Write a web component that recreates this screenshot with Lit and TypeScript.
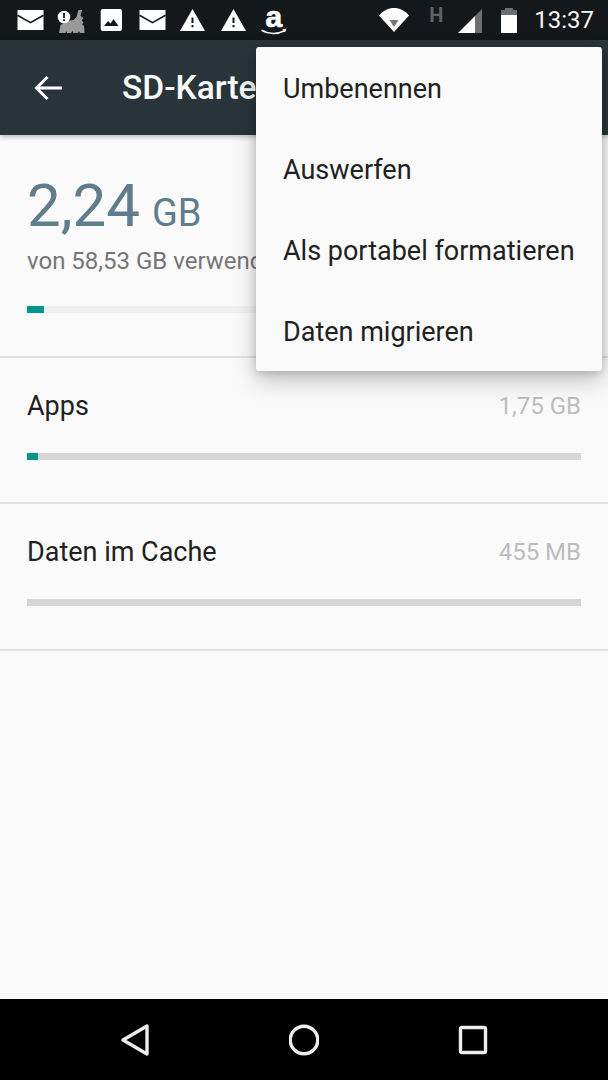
import { LitElement, html, css, svg } from "lit";
import { customElement } from "lit/decorators.js";

const mail = svg`<path class="w" d="M0.5 4h26v20h-26z"/><path class="cut" d="M0.5 9.2l13 7.5 13-7.5"/>`;
const warn = svg`<path class="w" d="M1 25L13.5 3 26 25z"/><path class="d" d="M12.5 11.5h2v5.5h-2zM12.5 19h2v2.3h-2z"/>`;
const leftIcons = [
  mail,
  svg`<path class="g" d="M1 27l1.500-8 6-4 7-1 3-3 2-7h3.500l-1.500 6 3 2-2 2.500 2 2-1.500 2 2 1.500.500 7h-4.500l-1-2-1 2h-4.500l-1-2-1.500 2h-4l-.500-2-1 2z"/><circle class="w" cx="6" cy="11" r="6.300"/><path class="d" d="M5.100 7h1.800v5H5.100zM5.100 13.200h1.800v1.800H5.100z"/>`,
  svg`<rect class="w" x="2.700" y="3" width="21.300" height="22" rx="2.200"/><path class="d" d="M6 20l4-5 2.500 2.500 3-4.500 5 7z"/>`,
  mail,
  warn,
  warn,
  svg`<text class="amz" x="5.500" y="21">a</text><path class="smile" d="M1.500 24.200c7 4.200 16 4.200 23 .600"/><path class="w" d="M22.300 23l4.200-.200-1.500 3.700z"/>`,
];

@customElement("app-root")
export class AppRoot extends LitElement {
  static styles = css`
    :host {
      display: block;
      width: 608px;
      height: 1080px;
      position: relative;
      overflow: hidden;
      font-family: Roboto, "Noto Sans", sans-serif;
      background: #fafafa;
    }
    .page { display: flex; flex-direction: column; height: 1080px; }
    .status {
      height: 40px;
      flex: none;
      background: #14181b;
      display: flex;
      align-items: center;
      padding: 0 14px 0 17px;
    }
    .left { display: flex; gap: 12.5px; }
    .left svg { width: 28px; height: 28px; display: block; overflow: visible; }
    .right { margin-left: auto; display: flex; align-items: center; }
    .w { fill: #fff; }
    .d { fill: #14181b; }
    .g { fill: #9a9a9a; }
    .cut { fill: none; stroke: #14181b; stroke-width: 1.600; }
    .smile { fill: none; stroke: #fff; stroke-width: 1.600; }
    .amz { font: 700 30px "Liberation Sans", sans-serif; fill: #fff; stroke: #fff; stroke-width: 0.700; }
    .wifi { width: 30px; height: 24px; display: block; }
    .wifi-in { fill: #757575; }
    .h {
      font-weight: 700;
      font-size: 20px;
      line-height: 20px;
      color: #5f6163;
      margin: -11px 0 0 20px;
      width: 13px;
    }
    .signal { width: 24px; height: 24px; margin: 2px 0 0 16px; display: block; }
    .sig-g { fill: #6e6e6e; }
    .batt { width: 16px; height: 25px; margin: 1px 0 0 19px; display: block; }
    .time { font-size: 24px; color: #f5f5f5; margin-left: 17px; line-height: 40px; }
    .bar {
      height: 95px;
      flex: none;
      background: #29353b;
      display: flex;
      align-items: center;
      box-shadow: 0 2px 5px rgba(0, 0, 0, 0.25);
      position: relative;
    }
    .back { width: 28px; height: 26px; margin-left: 34px; display: block; }
    .back path { fill: none; stroke: #fff; stroke-width: 3; }
    .title { font-size: 33.500px; font-weight: 500; color: #fafafa; margin-left: 60px; }
    .content { flex: 1; min-height: 0; }
    .summary { height: 223px; box-sizing: border-box; padding: 36px 27px 0; border-bottom: 2px solid #e0e0e0; }
    .used { display: flex; align-items: baseline; color: #607d8b; height: 70px; line-height: 70px; }
    .big { font-size: 60px; }
    .unit { font-size: 38px; margin-left: 12px; }
    .of { font-size: 24px; color: #757575; line-height: 30px; margin-top: 5px; white-space: nowrap; }
    .track { height: 7px; background: #d6d6d6; }
    .track.light { background: #f0f0f0; }
    .fill { height: 100%; background: #009688; }
    .summary .track { margin-top: 30px; }
    .row { box-sizing: border-box; padding: 28px 27px 0; border-bottom: 2px solid #e0e0e0; height: 146px; }
    .row.tall { height: 147px; }
    .line { display: flex; justify-content: space-between; align-items: center; height: 40px; }
    .name { font-size: 27px; color: #212121; }
    .val { font-size: 24px; color: #bdbdbd; }
    .row .track { margin-top: 27px; }
    .nav {
      height: 81px;
      flex: none;
      background: #000;
      display: flex;
      align-items: center;
      gap: 139px;
      padding-left: 120px;
    }
    .nav svg { width: 30px; height: 32px; display: block; }
    .nav * { fill: none; stroke: #eeeeee; stroke-width: 3.400; stroke-linejoin: round; }
    .menu {
      position: absolute;
      left: 255.500px;
      top: 47px;
      width: 346px;
      background: #fafafa;
      border-radius: 3px;
      box-shadow: 0 10px 24px rgba(0, 0, 0, 0.22), 0 2px 8px rgba(0, 0, 0, 0.18);
    }
    .item {
      height: 81px;
      box-sizing: border-box;
      padding-top: 2px;
      display: flex;
      align-items: center;
      padding-left: 27.500px;
      font-size: 27px;
      color: #212121;
    }
  `;

  render() {
    return html`
      <div class="page">
        <div class="status">
          <div class="left">
            ${leftIcons.map((i) => html`<svg viewBox="0 0 28 28">${i}</svg>`)}
          </div>
          <div class="right">
            <svg class="wifi" viewBox="0 0 30 24">
              <path class="w" d="M0 7.500C8 -2.500 22 -2.500 30 7.500L15 24z"/>
              <path class="wifi-in" d="M10.500 12h9L15 19z"/>
            </svg>
            <div class="h">H</div>
            <svg class="signal" viewBox="0 0 24 24">
              <path class="w" d="M0 24L17 7v17z"/>
              <path class="sig-g" d="M17 7l7-7v24h-7z"/>
            </svg>
            <svg class="batt" viewBox="0 0 16 25">
              <path class="sig-g" d="M4 0h8v2h4v6H0V2h4z"/>
              <path class="w" d="M0 7h16v18H0z"/>
            </svg>
            <div class="time">13:37</div>
          </div>
        </div>
        <div class="bar">
          <svg class="back" viewBox="0 0 28 26"><path d="M28 13H3M13.500 2L2.500 13l11 11"/></svg>
          <div class="title">SD-Karte</div>
        </div>
        <div class="content">
          <div class="summary">
            <div class="used"><span class="big">2,24</span><span class="unit">GB</span></div>
            <div class="of">von 58,53 GB verwendet</div>
            <div class="track light"><div class="fill" style="width:17px"></div></div>
          </div>
          <div class="row">
            <div class="line"><span class="name">Apps</span><span class="val">1,75 GB</span></div>
            <div class="track"><div class="fill" style="width:11px"></div></div>
          </div>
          <div class="row tall">
            <div class="line"><span class="name">Daten im Cache</span><span class="val">455 MB</span></div>
            <div class="track"></div>
          </div>
        </div>
        <div class="nav">
          <svg viewBox="0 0 30 32"><path d="M3 16L27 2v28z"/></svg>
          <svg viewBox="0 0 30 32"><circle cx="15" cy="16" r="13.800"/></svg>
          <svg viewBox="0 0 30 32"><rect x="2.500" y="3.500" width="25" height="25" rx="1.500"/></svg>
        </div>
      </div>
      <div class="menu">
        <div class="item">Umbenennen</div>
        <div class="item">Auswerfen</div>
        <div class="item">Als portabel formatieren</div>
        <div class="item">Daten migrieren</div>
      </div>
    `;
  }
}
